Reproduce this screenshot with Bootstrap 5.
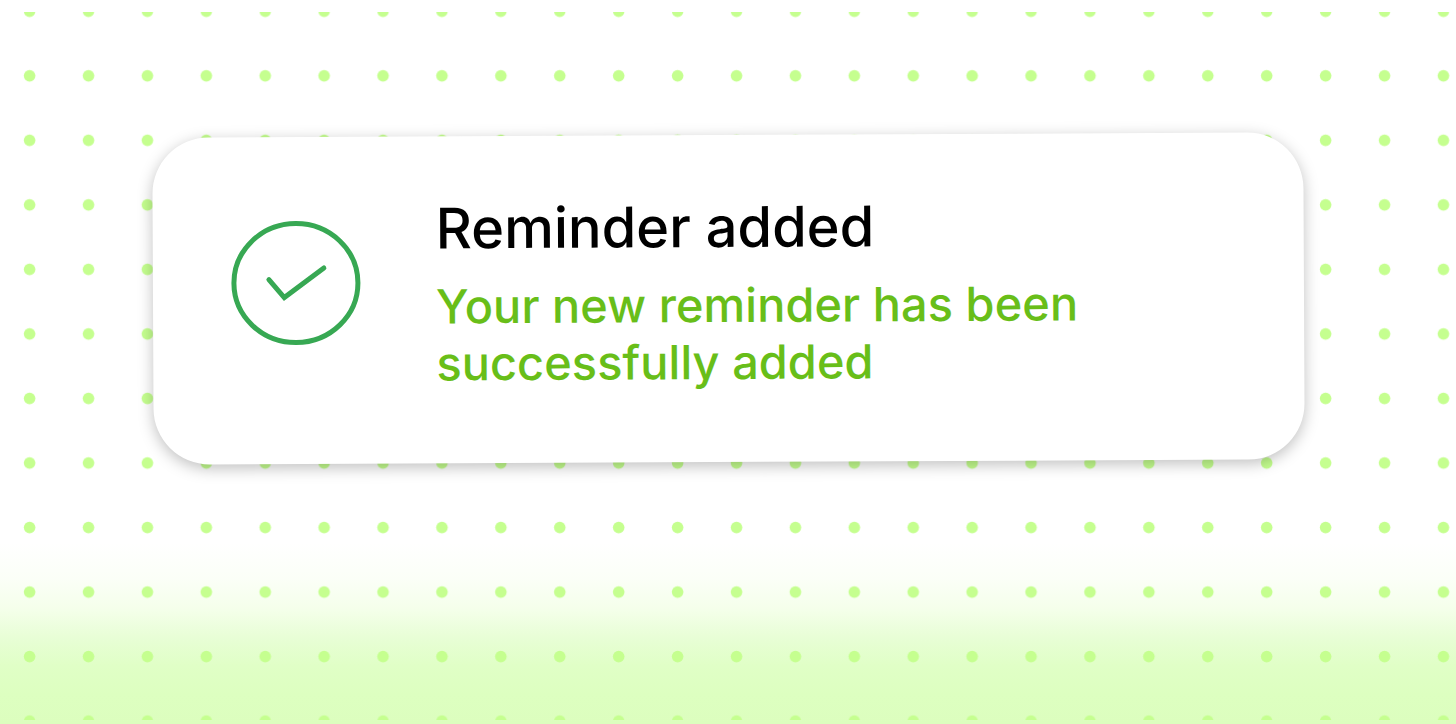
<!DOCTYPE html>
<html lang="en">
<head>
<meta charset="utf-8">
<meta name="viewport" content="width=device-width, initial-scale=1">
<title>Reminder added</title>
<link href="https://cdn.jsdelivr.net/npm/bootstrap@5.3.0/dist/css/bootstrap.min.css" rel="stylesheet">
<style>
  body { font-family: Inter, sans-serif; background: #fff; }
  .stage { padding: 135px 10%; background: linear-gradient(to bottom, #fff 75%, #fbfff7 80%, #f5ffeb 84%, #e8fed6 88%, #e0ffc6 92%, #ddffc0 96%, #dcfebe 100%); }
  .dot-field { position: absolute; inset: 12px 0 4px; }
  .notice {
    max-width: 1151px; min-height: 327px; padding: 56px 77px 0;
    border-radius: 56px; border: 0; background: #fff;
    box-shadow: 0 4px 15px rgba(0, 0, 0, .25);
    transform: rotate(-.27deg);
  }
  .notice-icon { width: 132px; height: 128px; margin-top: 26px; }
  .notice-copy { margin-left: 74px; max-width: 720px; }
  .notice-title { font-size: 56px; line-height: 72px; font-weight: 500; color: #000; margin-bottom: 13px; }
  .notice-text { font-size: 47px; line-height: 57px; font-weight: 500; color: #68be19; }
</style>
</head>
<body>
<main class="stage position-relative min-vh-100 d-flex justify-content-center align-items-start overflow-hidden">
  <div class="dot-field">
    <svg class="d-block w-100 h-100" viewBox="0 0 1456 708" preserveAspectRatio="xMidYMid slice" aria-hidden="true">
      <defs>
        <pattern id="dots" width="58.91" height="64.53" patternUnits="userSpaceOnUse" y="-33.1">
          <circle cx="29.6" cy="32.3" r="5.8" fill="#c5ff8f"/>
        </pattern>
      </defs>
      <rect width="1456" height="708" fill="url(#dots)"/>
    </svg>
  </div>
  <section class="notice card flex-row align-items-start w-100" role="status">
    <svg class="notice-icon flex-shrink-0" viewBox="0 0 132 128" fill="none" stroke="#37a853" stroke-width="5" aria-hidden="true">
      <ellipse cx="66" cy="64" rx="62" ry="59.5"/>
      <path d="M39 60.5 54.3 78.5 94 49" stroke-linecap="round"/>
    </svg>
    <div class="notice-copy">
      <h1 class="notice-title">Reminder added</h1>
      <p class="notice-text mb-0">Your new reminder has been successfully added</p>
    </div>
  </section>
</main>
<script src="https://cdn.jsdelivr.net/npm/bootstrap@5.3.0/dist/js/bootstrap.bundle.min.js"></script>
</body>
</html>
